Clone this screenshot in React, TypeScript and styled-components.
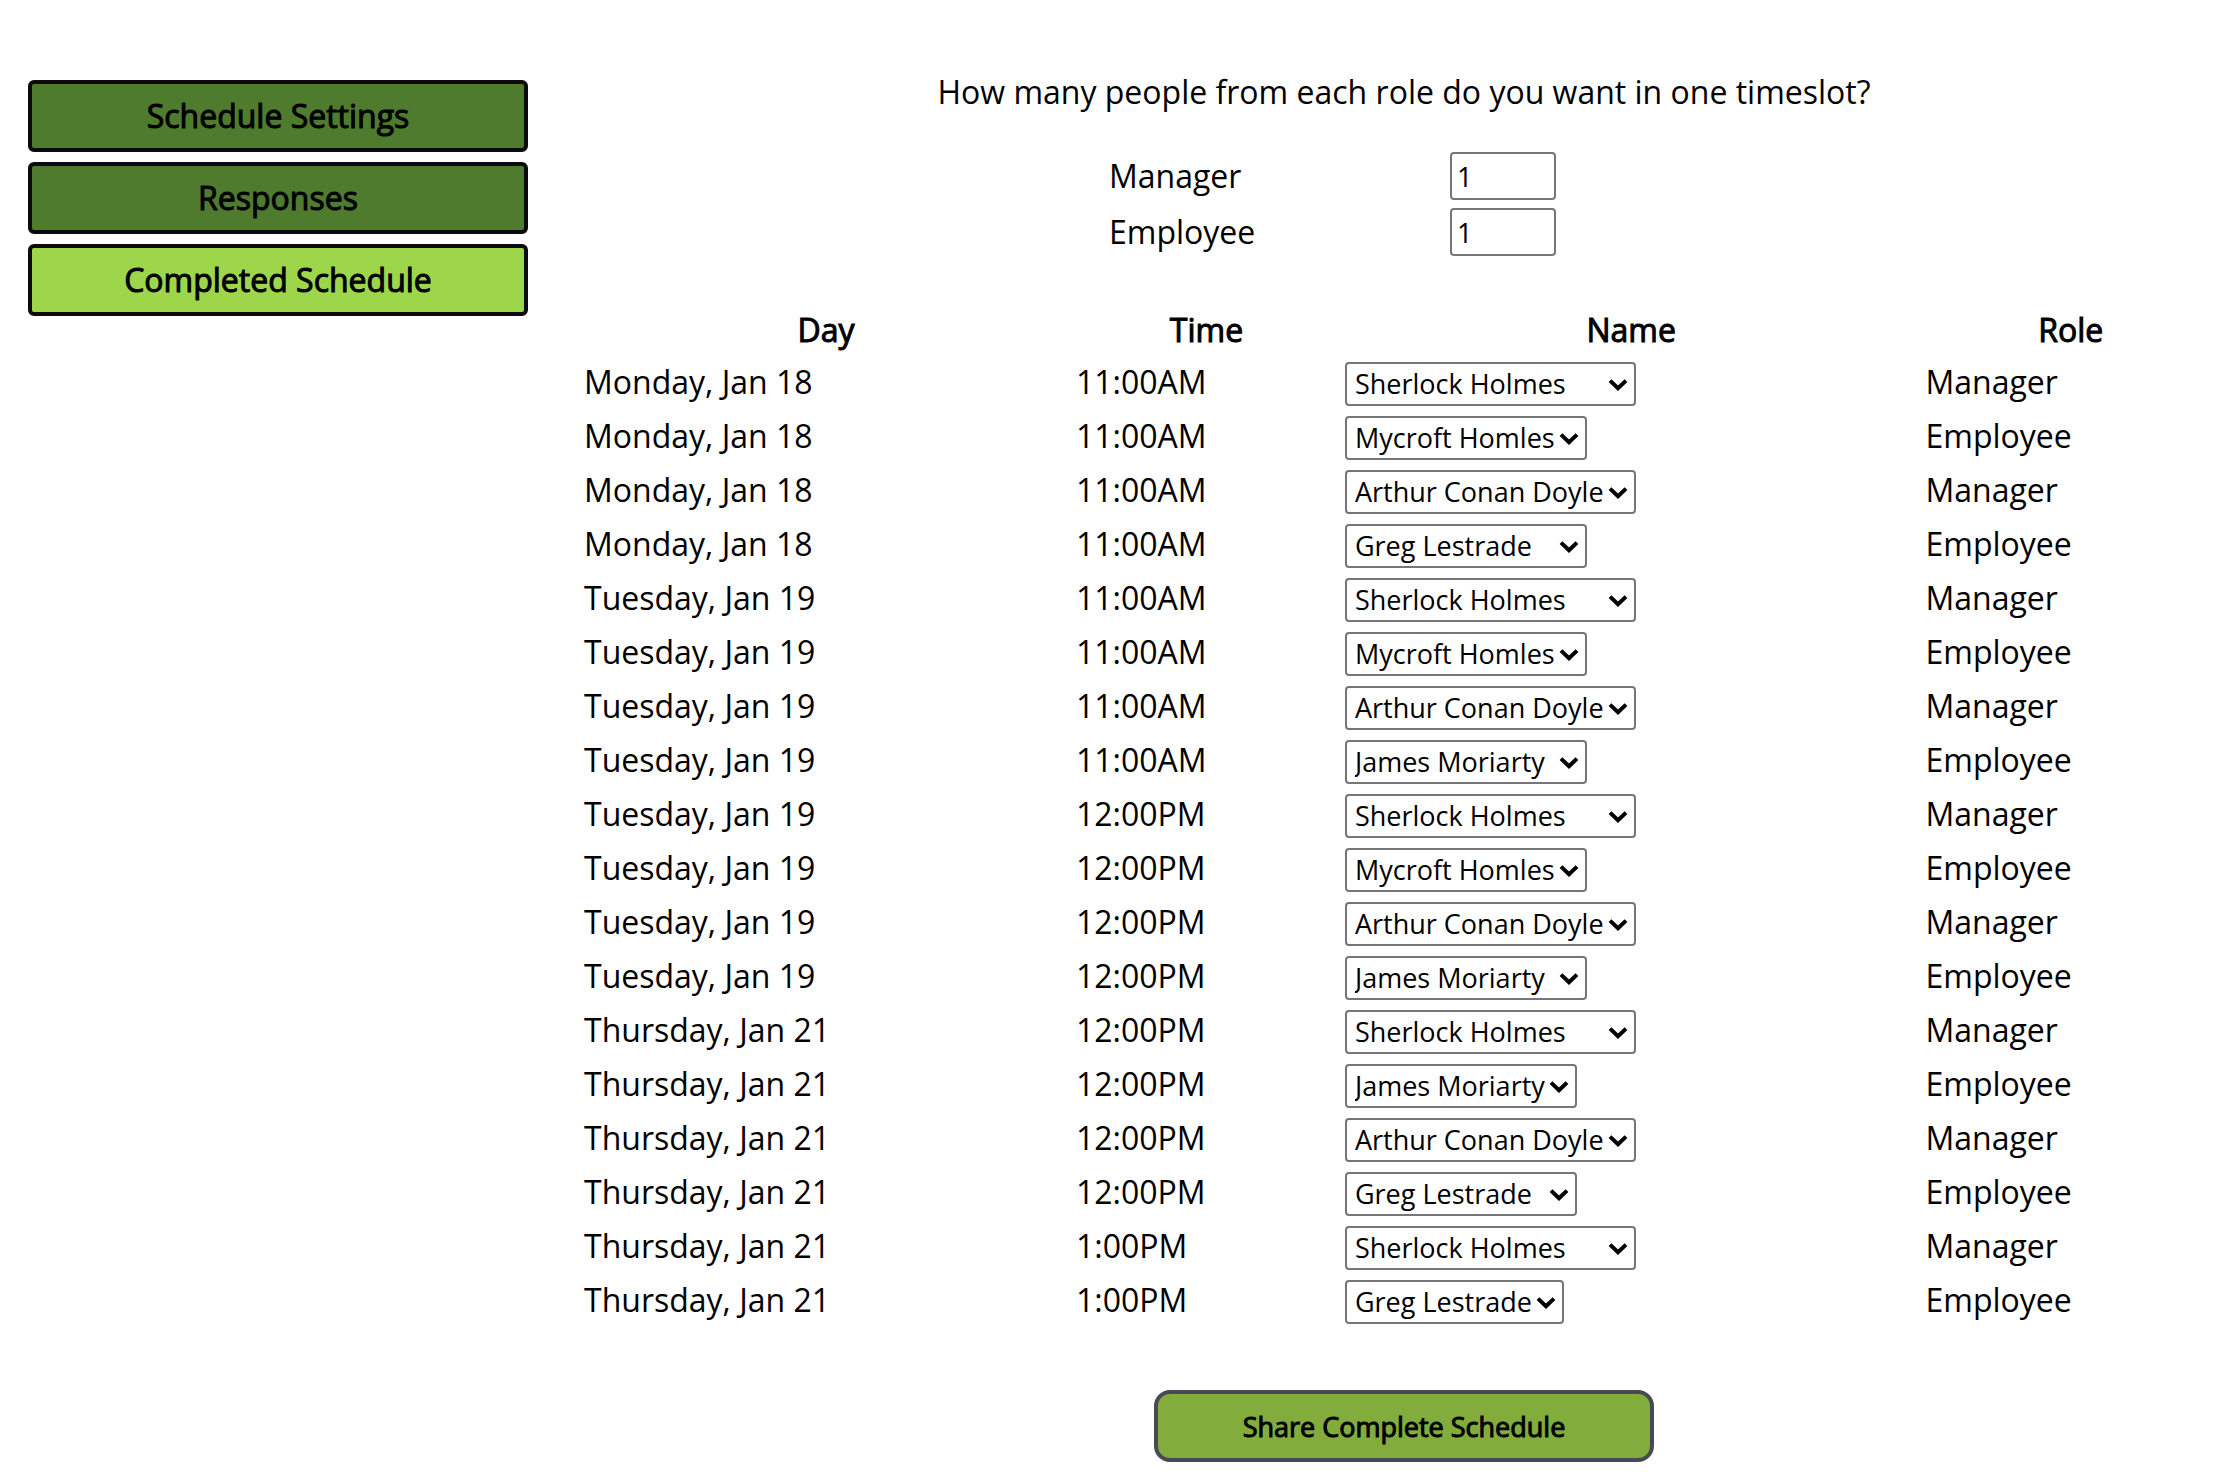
import React, { useState } from "react";
import styled, { createGlobalStyle, css } from "styled-components";

const GlobalStyle = createGlobalStyle`
  *, *::before, *::after { box-sizing: border-box; }
  body {
    margin: 0;
    background: #ffffff;
    color: #000000;
    font-family: "Open Sans", "Noto Sans", sans-serif;
    font-size: 32px;
    line-height: 44px;
  }
`;

const heavyText = css`
  font-weight: 400;
  -webkit-text-stroke: 1px currentColor;
`;

const Page = styled.div`
  display: flex;
  align-items: flex-start;
  gap: 56px;
  padding-left: 28px;
`;

const Sidebar = styled.nav`
  flex: 0 0 500px;
  display: flex;
  flex-direction: column;
  gap: 10px;
  padding-top: 80px;
`;

const NavButton = styled.button<{ $active: boolean }>`
  ${heavyText}
  height: 72px;
  padding: 0;
  border: 4px solid #0c0a0b;
  border-radius: 6px;
  background: ${(p) => (p.$active ? "#9dd64b" : "#4f7b2e")};
  color: #000000;
  font-family: inherit;
  font-size: 32px;
  line-height: 44px;
  cursor: pointer;
`;

const Main = styled.main`
  flex: 1 1 0;
  min-width: 0;
  display: flex;
  flex-direction: column;
  align-items: center;
  padding: 70px 0 14px;
`;

const Question = styled.p`
  margin: 0;
  text-align: center;
`;

const RoleCounts = styled.div`
  width: 590px;
  display: flex;
  flex-direction: column;
  gap: 8px;
  margin: 38px 0 48px;
`;

const RoleCount = styled.div`
  display: grid;
  grid-template-columns: 341px 106px;
  align-items: center;
`;

const CountInput = styled.input`
  width: 100%;
  height: 48px;
  padding: 2px 5px;
  border: 2px solid #767676;
  border-radius: 4px;
  background: #ffffff;
  color: #000000;
  font-family: inherit;
  font-size: 27px;
  appearance: textfield;
`;

const Schedule = styled.table`
  width: 100%;
  table-layout: fixed;
  border-collapse: collapse;
`;

const HeadCell = styled.th<{ $width: string }>`
  ${heavyText}
  width: ${(p) => p.$width};
  padding: 4px 8px 4px 0;
  text-align: center;
`;

const Cell = styled.td`
  height: 54px;
  padding: 4px 0;
  vertical-align: baseline;
`;

const SelectBox = styled.span`
  position: relative;
  display: inline-block;
  line-height: 36px;
`;

const NameSelect = styled.select`
  height: 44px;
  padding: 0 30px 0 8px;
  border: 2px solid #767676;
  border-radius: 4px;
  background: #ffffff;
  color: #000000;
  font-family: inherit;
  font-size: 27px;
  appearance: none;
`;

const Chevron = styled.svg`
  position: absolute;
  right: 8px;
  top: 16px;
  width: 20px;
  height: 14px;
  pointer-events: none;
`;

const ShareButton = styled.button`
  ${heavyText}
  width: 500px;
  height: 72px;
  margin-top: 62px;
  padding: 0;
  border: 4px solid #474954;
  border-radius: 16px;
  background: #82ad3c;
  color: #000000;
  font-family: inherit;
  font-size: 27px;
  cursor: pointer;
`;

const SHERLOCK = "Sherlock Holmes";
const ARTHUR = "Arthur Conan Doyle";
const MYCROFT = "Mycroft Homles";
const GREG = "Greg Lestrade";
const JAMES = "James Moriarty";

const managers = [SHERLOCK, ARTHUR];
const staff = [MYCROFT, GREG, JAMES];
const lateStaff = [JAMES, GREG];

type Shift = {
  day: string;
  time: string;
  name: string;
  role: "Manager" | "Employee";
  options: string[];
};

const shift = (day: string, time: string, name: string, options: string[]): Shift => ({
  day,
  time,
  name,
  options,
  role: options === managers ? "Manager" : "Employee",
});

const MON = "Monday, Jan 18";
const TUE = "Tuesday, Jan 19";
const THU = "Thursday, Jan 21";

const shifts: Shift[] = [
  shift(MON, "11:00AM", SHERLOCK, managers),
  shift(MON, "11:00AM", MYCROFT, staff),
  shift(MON, "11:00AM", ARTHUR, managers),
  shift(MON, "11:00AM", GREG, staff),
  shift(TUE, "11:00AM", SHERLOCK, managers),
  shift(TUE, "11:00AM", MYCROFT, staff),
  shift(TUE, "11:00AM", ARTHUR, managers),
  shift(TUE, "11:00AM", JAMES, staff),
  shift(TUE, "12:00PM", SHERLOCK, managers),
  shift(TUE, "12:00PM", MYCROFT, staff),
  shift(TUE, "12:00PM", ARTHUR, managers),
  shift(TUE, "12:00PM", JAMES, staff),
  shift(THU, "12:00PM", SHERLOCK, managers),
  shift(THU, "12:00PM", JAMES, lateStaff),
  shift(THU, "12:00PM", ARTHUR, managers),
  shift(THU, "12:00PM", GREG, lateStaff),
  shift(THU, "1:00PM", SHERLOCK, managers),
  shift(THU, "1:00PM", GREG, [GREG]),
];

const tabs = ["Schedule Settings", "Responses", "Completed Schedule"];

const columns = [
  { title: "Day", width: "30%" },
  { title: "Time", width: "16.4%" },
  { title: "Name", width: "35.4%" },
  { title: "Role", width: "18.2%" },
];

function NamePicker({ entry }: { entry: Shift }) {
  return (
    <SelectBox>
      <NameSelect
        defaultValue={entry.name}
        aria-label={`${entry.role} for ${entry.day}, ${entry.time}`}
      >
        {entry.options.map((name) => (
          <option key={name}>{name}</option>
        ))}
      </NameSelect>
      <Chevron viewBox="0 0 20 14" aria-hidden="true">
        <path d="M2 2.6 L10 10.2 L18 2.6" fill="none" stroke="#000000" strokeWidth="4" />
      </Chevron>
    </SelectBox>
  );
}

export default function App() {
  const [tab, setTab] = useState("Completed Schedule");

  return (
    <>
      <GlobalStyle />
      <Page>
        <Sidebar>
          {tabs.map((name) => (
            <NavButton key={name} $active={name === tab} onClick={() => setTab(name)}>
              {name}
            </NavButton>
          ))}
        </Sidebar>
        <Main>
          <Question>How many people from each role do you want in one timeslot?</Question>
          <RoleCounts>
            {["Manager", "Employee"].map((role) => (
              <RoleCount key={role}>
                <label htmlFor={`count-${role}`}>{role}</label>
                <CountInput id={`count-${role}`} type="number" min={0} defaultValue={1} />
              </RoleCount>
            ))}
          </RoleCounts>
          <Schedule>
            <thead>
              <tr>
                {columns.map((column) => (
                  <HeadCell key={column.title} scope="col" $width={column.width}>
                    {column.title}
                  </HeadCell>
                ))}
              </tr>
            </thead>
            <tbody>
              {shifts.map((entry, index) => (
                <tr key={index}>
                  <Cell>{entry.day}</Cell>
                  <Cell>{entry.time}</Cell>
                  <Cell>
                    <NamePicker entry={entry} />
                  </Cell>
                  <Cell>{entry.role}</Cell>
                </tr>
              ))}
            </tbody>
          </Schedule>
          <ShareButton>Share Complete Schedule</ShareButton>
        </Main>
      </Page>
    </>
  );
}
